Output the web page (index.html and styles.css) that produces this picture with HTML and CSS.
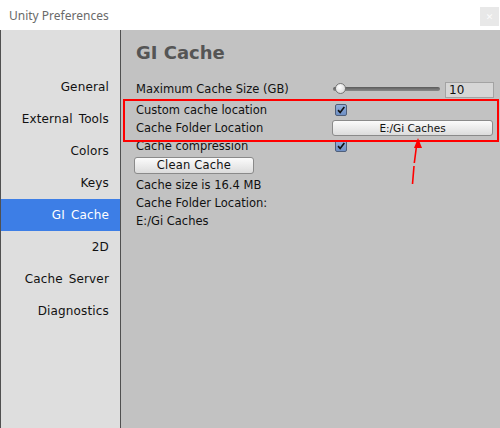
FILE: index.html
```html
<!DOCTYPE html>
<html>
<head>
<meta charset="utf-8">
<link rel="stylesheet" href="styles.css">
</head>
<body>
<div class="window">
  <div class="titlebar">
    <span class="title">Unity Preferences</span>
    <span class="close">✕</span>
  </div>
  <div class="main">
    <div class="sidebar">
      <div class="item">General</div>
      <div class="item">External Tools</div>
      <div class="item">Colors</div>
      <div class="item">Keys</div>
      <div class="item selected">GI Cache</div>
      <div class="item">2D</div>
      <div class="item">Cache Server</div>
      <div class="item">Diagnostics</div>
    </div>
    <div class="content">
      <h1 class="heading">GI Cache</h1>
      <div class="row r1">
        <span class="label">Maximum Cache Size (GB)</span>
        <div class="slider"><div class="track"></div><div class="thumb"></div></div>
        <div class="numfield">10</div>
      </div>
      <div class="row r2">
        <span class="label">Custom cache location</span>
        <span class="check"><svg viewBox="0 0 12 12" width="12" height="12"><path d="M2.5 6.2 L5 9 L10 2.5" fill="none" stroke="#111" stroke-width="2"/></svg></span>
      </div>
      <div class="row r3">
        <span class="label">Cache Folder Location</span>
        <div class="btn wide">E:/Gi Caches</div>
      </div>
      <div class="row r4">
        <span class="label">Cache compression</span>
        <span class="check"><svg viewBox="0 0 12 12" width="12" height="12"><path d="M2.5 6.2 L5 9 L10 2.5" fill="none" stroke="#111" stroke-width="2"/></svg></span>
      </div>
      <div class="btn clean">Clean Cache</div>
      <div class="text t1">Cache size is 16.4 MB</div>
      <div class="text t2">Cache Folder Location:</div>
      <div class="text">E:/Gi Caches</div>
    </div>
  </div>
  <div class="redbox"></div>
  <svg class="arrow" width="500" height="428" viewBox="0 0 500 428">
    <path d="M412.5 184 L414 166 M414.3 163 L416.5 146" fill="none" stroke="#f00" stroke-width="1.6"/>
    <path d="M418 138 L422 148 L414 148 Z" fill="#f00"/>
  </svg>
</div>
</body>
</html>
```

FILE: styles.css
```css
* { box-sizing: border-box; }
html, body { margin: 0; padding: 0; }
body {
  width: 500px;
  height: 428px;
  overflow: hidden;
  font-family: "DejaVu Sans", Verdana, sans-serif;
  font-size: 11.5px;
  color: #111;
}
.window {
  position: relative;
  width: 500px;
  height: 428px;
}
.titlebar {
  height: 30px;
  background: #fff;
  display: flex;
  align-items: center;
  justify-content: space-between;
  padding-left: 9px;
  padding-right: 1px;
}
.title {
  font-family: "Noto Sans", "Liberation Sans", sans-serif;
  font-size: 12px;
  color: #6a6a6a;
}
.close {
  width: 19px;
  height: 19px;
  background: #e8e8e8;
  color: #fbfbfb;
  font-size: 9px;
  font-weight: bold;
  display: flex;
  align-items: center;
  justify-content: center;
  margin-top: 3px;
}
.main {
  display: flex;
  height: 398px;
  border-left: 1px solid #505050;
}
.sidebar {
  width: 120px;
  background: #dedede;
  border-right: 1px solid #505050;
  padding-top: 41px;
  flex: none;
}
.item {
  height: 32px;
  line-height: 32px;
  text-align: right;
  padding-right: 11px;
  font-size: 12px;
  word-spacing: 2px;
  letter-spacing: 0.15px;
  color: #111;
}
.item.selected {
  background: #3d7ee6;
  color: #fff;
}
.content {
  flex: 1;
  background: #c2c2c2;
  padding-left: 15px;
  padding-top: 11px;
}
.heading {
  margin: 0;
  font-size: 18px;
  font-weight: bold;
  color: #555;
  height: 24px;
  line-height: 24px;
}
.row {
  display: flex;
  align-items: center;
  height: 18px;
}
.r1 { margin-top: 15px; }
.label {
  width: 198px;
  flex: none;
  white-space: nowrap;
}
.slider {
  position: relative;
  width: 107px;
  height: 12px;
  margin-left: -1px;
}
.track {
  position: absolute;
  left: 0;
  right: 0;
  top: 4px;
  height: 4px;
  border-radius: 2px;
  background: linear-gradient(#5a5a5a, #8a8a8a);
}
.thumb {
  position: absolute;
  left: 2px;
  top: 0;
  width: 11px;
  height: 11px;
  border-radius: 50%;
  background: radial-gradient(circle at 40% 35%, #ffffff, #cfcfcf);
  border: 1px solid #777;
}
.numfield {
  margin-left: 5px;
  width: 49px;
  height: 16px;
  background: #d6d6d6;
  border: 1px solid #a3a3a3;
  font-size: 12px;
  line-height: 14px;
  padding-left: 3px;
  margin-top: 1px;
}
.r2 { margin-top: 3px; }
.check {
  width: 12px;
  height: 12px;
  background: linear-gradient(#93afd9, #6e8fc4);
  border: 1px solid #4f5f7a;
  border-radius: 2px;
  display: flex;
  align-items: center;
  justify-content: center;
  margin-left: 1px;
}
.check svg { display: block; margin-top: -1px; }
.btn {
  height: 16px;
  border: 1px solid #8a8a8a;
  border-radius: 3px;
  background: linear-gradient(#fbfbfb, #dcdcdc);
  text-align: center;
  line-height: 14px;
  font-size: 11.5px;
}
.wide {
  width: 161px;
  margin-left: -2px;
  font-size: 10.5px;
}
.clean {
  width: 120px;
  height: 17px;
  margin-left: -2px;
  margin-top: 2px;
  font-size: 11.5px;
  line-height: 15px;
  letter-spacing: 0.2px;
}
.text {
  height: 18px;
  line-height: 18px;
  white-space: nowrap;
}
.t1 { margin-top: 2px; }
.t2 { height: 18px; }
.redbox {
  position: absolute;
  left: 123px;
  top: 99px;
  width: 376px;
  height: 43px;
  border: 2px solid #f00;
  pointer-events: none;
}
.arrow {
  position: absolute;
  left: 0;
  top: 0;
  pointer-events: none;
}
```
